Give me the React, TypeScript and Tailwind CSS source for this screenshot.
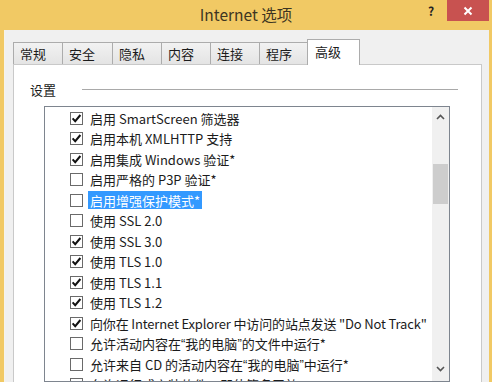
import React from "react";

const tabs = [
  { label: "常规", w: "w-[49px]" },
  { label: "安全", w: "w-[50px]" },
  { label: "隐私", w: "w-[49px]" },
  { label: "内容", w: "w-[49px]" },
  { label: "连接", w: "w-[49px]" },
  { label: "程序", w: "w-[48px]" },
];

// curly quotes are narrow in the reference, so they get a latin font
function Q({ c }: { c: string }) {
  return <span className="font-['Liberation_Sans',sans-serif]">{c}</span>;
}

const rows: { text: React.ReactNode; checked: boolean; selected?: boolean; tight?: boolean }[] = [
  { text: "启用 SmartScreen 筛选器", checked: true },
  { text: "启用本机 XMLHTTP 支持", checked: true },
  { text: "启用集成 Windows 验证*", checked: true },
  { text: "启用严格的 P3P 验证*", checked: false },
  { text: "启用增强保护模式*", checked: false, selected: true },
  { text: "使用 SSL 2.0", checked: false },
  { text: "使用 SSL 3.0", checked: true },
  { text: "使用 TLS 1.0", checked: true },
  { text: "使用 TLS 1.1", checked: true },
  { text: "使用 TLS 1.2", checked: true },
  { text: "向你在 Internet Explorer 中访问的站点发送 \"Do Not Track\"", checked: true, tight: true },
  {
    text: (
      <>
        允许活动内容在<Q c="“" />我的电脑<Q c="”" />的文件中运行*
      </>
    ),
    checked: false,
  },
  {
    text: (
      <>
        允许来自 CD 的活动内容在<Q c="“" />我的电脑<Q c="”" />中运行*
      </>
    ),
    checked: false,
  },
  { text: "允许运行或安装软件，即使签名无效", checked: false },
];

function CheckBox({ checked }: { checked: boolean }) {
  return (
    <div className="w-[13px] h-[13px] border border-[#6a6a6a] bg-white flex items-center justify-center shrink-0">
      {checked && (
        <svg width="11" height="11" viewBox="0 0 11 11">
          <path d="M1.6 5.4 L4.2 8.2 L9.4 2" fill="none" stroke="#111" strokeWidth="2" />
        </svg>
      )}
    </div>
  );
}

function Chevron({ up }: { up: boolean }) {
  return (
    <svg width="9" height="6" viewBox="0 0 9 6">
      <path
        d={up ? "M1 5 L4.5 1.5 L8 5" : "M1 1 L4.5 4.5 L8 1"}
        fill="none"
        stroke="#555"
        strokeWidth="1.6"
      />
    </svg>
  );
}

export default function App() {
  return (
    <div className="w-[492px] h-[382px] overflow-hidden bg-[#F1C964] flex flex-col font-['Noto_Sans_CJK_SC','Noto_Sans',sans-serif] text-[#1b1b1b]">
      {/* Title bar */}
      <div className="h-[30px] shrink-0 grid grid-cols-[1fr_auto_1fr]">
        <div />
        <div className="pt-[3px] text-[15.5px] leading-[22px] text-[#3d3522]">Internet 选项</div>
        <div className="flex justify-end items-start pr-[3px]">
          <div className="w-[28px] h-[21px] flex items-center justify-center text-[12px] font-bold text-[#222] mr-[2px]">?</div>
          <div className="w-[42px] h-[21px] bg-[#C85250] flex items-center justify-center">
            <svg width="10" height="10" viewBox="0 0 10 10">
              <path d="M1.5 1.5 L8.5 8.5 M8.5 1.5 L1.5 8.5" stroke="#fff" strokeWidth="2" />
            </svg>
          </div>
        </div>
      </div>

      {/* Dialog body */}
      <div className="flex-1 ml-[4px] mr-[3px] bg-[#F0F0F0] border-l border-[#f7f3e8] pl-[8px] pr-[7px] pt-[9px] flex flex-col">
        {/* Tabs */}
        <div className="flex items-end h-[25px] relative z-10">
          {tabs.map((t, i) => (
            <div
              key={i}
              className={`${t.w} h-[22px] border-l border-t border-[#ACACAC] bg-gradient-to-b from-[#F2F2F2] to-[#E4E4E4] text-[13px] leading-none pl-[6px] flex items-center`}
            >
              {t.label}
            </div>
          ))}
          <div className="w-[53px] h-[26px] -mb-[1px] border border-b-0 border-[#ACACAC] bg-white text-[13px] leading-none pl-[7px] pt-[5px]">
            高级
          </div>
        </div>

        {/* Tab panel */}
        <div className="flex-1 bg-white border border-[#C9C9C9] border-b-0 pl-[16px] pr-[23px]">
          <div className="flex items-center h-[24px] mt-[12px]">
            <span className="text-[13px] leading-none">设置</span>
            <div className="flex-1 ml-[26px] h-px bg-[#A9A9A9]" />
          </div>

          {/* List box */}
          <div className="ml-[14px] mr-[8px] mt-[5px] h-[276px] border border-[#7E858F] flex">
            <div className="flex-1 pt-[1px] pl-[25px] overflow-hidden">
              {rows.map((r, i) => (
                <div key={i} className="h-[20.5px] flex items-center whitespace-nowrap">
                  <CheckBox checked={r.checked} />
                  <span
                    className={`ml-[5px] px-[2px] h-[18px] flex items-center text-[13px] leading-none ${
                      r.selected ? "bg-[#3399FF] text-white" : ""
                    } ${r.tight ? "tracking-[-0.15px]" : ""}`}
                  >
                    {r.text}
                  </span>
                </div>
              ))}
            </div>
            {/* Scrollbar */}
            <div className="w-[17px] bg-[#F0F0F0] flex flex-col">
              <div className="h-[17px] flex items-center justify-center pt-[2px]">
                <Chevron up />
              </div>
              <div className="flex-1 flex flex-col px-[1px]">
                <div className="h-[40px] mt-[40px] bg-[#CDCDCD]" />
                <div className="flex-1" />
              </div>
              <div className="h-[17px] flex items-center justify-center mb-[4px]">
                <Chevron up={false} />
              </div>
            </div>
          </div>
        </div>
      </div>
    </div>
  );
}
